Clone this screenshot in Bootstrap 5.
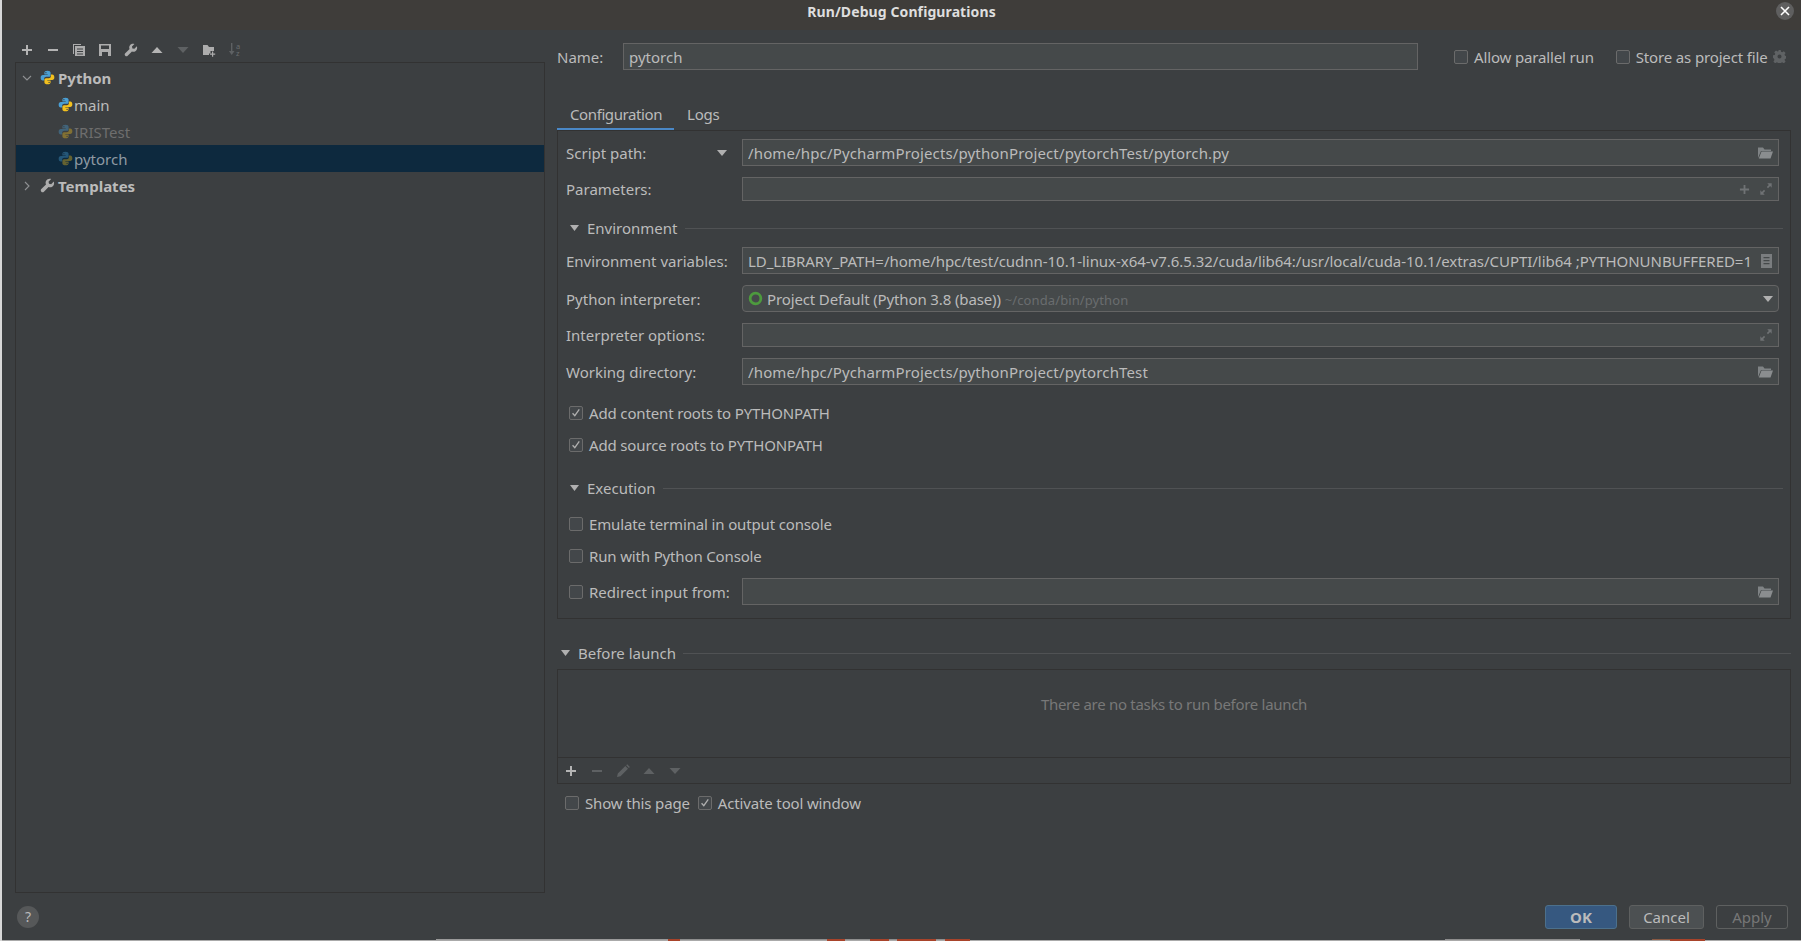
<!doctype html>
<html lang="en">
<head>
<meta charset="utf-8">
<title>Run/Debug Configurations</title>
<link rel="stylesheet" href="https://cdn.jsdelivr.net/npm/bootstrap@5.3.0/dist/css/bootstrap.min.css">
<style>
html,body{margin:0;height:941px;overflow:hidden;background:#3c3f41}
body{font-family:"Noto Sans","Liberation Sans",sans-serif;font-size:15px;line-height:20px;color:#bbb}
.dlg{width:1801px;height:941px;display:flex;flex-direction:column;border-left:2px solid #d8d8d8}
.ttl{height:30px;flex:none;background:#3f3d3a;color:#dedede;font-weight:700;font-size:14px;letter-spacing:.1px;position:relative;text-align:center;line-height:23px}
.closer{position:absolute;right:7px;top:2px;width:18px;height:18px;border-radius:50%;background:#5f5f5f;display:flex;align-items:center;justify-content:center}
.mainrow{flex:1;display:flex;min-height:0}
.leftp{width:553px;flex:none;padding-left:13px;display:flex;flex-direction:column}
.tbar{height:32px;flex:none;display:flex;align-items:center;padding-top:7px}
.tbtn{width:26px;height:26px;display:flex;align-items:center;justify-content:center;flex:none}
.tbar.main{margin-left:-1px}
.tree{width:530px;height:831px;border:1px solid #323232;padding:1px 0 0;flex:none}
.trow{height:27px;display:flex;align-items:center;white-space:nowrap}
.trow.sel{background:#0d293e}
.tw{width:10px;margin-left:6px;margin-right:8px;display:flex}
.trow.kid{padding-left:42px}
.trow .ic{margin-right:1px}
.trow .bld{font-weight:700;margin-left:2px}
.dimt{color:#6e6e6e}
.dim2{opacity:.38}
.seltxt{color:#8f9aa3}
.helpb{width:22px;height:22px;border-radius:50%;background:#565859;color:#bbb;display:flex;align-items:center;justify-content:center;margin:13px 0 0 2px;font-size:14px}
.rightp{flex:1;padding:13px 10px 0 2px;min-width:0;display:flex;flex-direction:column}
.namerow{display:flex;align-items:center;height:27px}
.namelbl{width:66px;flex:none}
.fld{background:#45494a;border:1px solid #646464;border-radius:0;color:#bbb;font-size:15px;line-height:20px;padding:0 5px;display:flex;align-items:center;white-space:nowrap;min-width:0;box-shadow:none}
.fld .val{flex:1;overflow:hidden}
.fld .endi{display:flex;gap:9px;align-items:center}
.nm{width:795px;flex:none;height:27px}
.chk{width:14px;height:14px;border:1px solid #6b6b6b;border-radius:2px;background:#43474a;flex:none;display:flex;align-items:center;justify-content:center}
.chkl{display:flex;align-items:center;gap:6px;white-space:nowrap;letter-spacing:-.15px}
.nav.tabsx{margin-top:31px;border:0;height:30px;flex:none}
.tabx{height:30px;padding:0 13px;color:#bbb}
.tabx.on{width:117px;border-bottom:3px solid #4a88c7;line-height:26px;letter-spacing:-.4px}
.tabx.off{line-height:26px;letter-spacing:-.2px}
.panel{border:1px solid #323232;height:489px;padding:8px 11px 0 8px;margin-top:-1px;flex:none;width:1234px}
.frow{display:flex;align-items:center;flex:none}
.flbl{width:176px;flex:none;white-space:nowrap;display:flex;justify-content:space-between;align-items:center;padding-right:15px}
.fld.w{flex:1}
.ls-wide{letter-spacing:.14px}
.ls-env{letter-spacing:-.035px}
.ls-proj{letter-spacing:-.13px}
.hdr{display:flex;align-items:center;height:20px;flex:none;white-space:nowrap}
.hdr .tri{margin:0 8px 0 4px;flex:none}
.hdr .ln{flex:1;height:1px;background:#505254;margin-left:7px}
.panel .hdr .ln{margin-right:-4px}
.blbox{width:1234px;height:115px;border:1px solid #323232;margin-top:6px;flex:none;display:flex;flex-direction:column}
.blmsg{height:88px;display:flex;align-items:center;justify-content:center;color:#787878;border-bottom:1px solid #323232;flex:none;padding-bottom:20px;letter-spacing:-.3px}
.bltb{height:25px;display:flex;align-items:center;padding-left:0}
.bltb .tbtn{height:25px}
.grayhint{color:#6a6d6f;font-size:13px;margin-left:4px;letter-spacing:.1px;padding-top:2px}
.foot{display:flex;justify-content:flex-end;gap:12px;padding-right:3px;margin-top:auto;margin-bottom:10px}
.btn.jb{height:24px;padding:0;font-size:15px;line-height:22px;border-radius:3px;color:#bbb;background:#4c5052;border:1px solid #5e6060;width:75px}
.btn.jb.ok{background:#365880;border-color:#4c708c;font-weight:700;width:72px;color:#bbb}
.btn.jb.ap{background:transparent;border-color:#5e6060;color:#777;width:72px}
.strip{height:2px;flex:none;display:flex;flex-direction:column}
.strip-a,.strip-b{height:1px;flex:none}
.strip-a{background:linear-gradient(90deg,#3c3f41 0,#3c3f41 434px,#9a9a9a 434px,#9a9a9a 666px,#a8432a 666px,#a8432a 678px,#8d8d8d 678px,#8d8d8d 825px,#a8432a 825px,#a8432a 843px,#8d8d8d 843px,#8d8d8d 868px,#a8432a 868px,#a8432a 887px,#8d8d8d 887px,#8d8d8d 895px,#a8432a 895px,#a8432a 934px,#8d8d8d 934px,#8d8d8d 943px,#a8432a 943px,#a8432a 968px,#3c3f41 968px,#3c3f41 1443px,#8d8d8d 1443px,#8d8d8d 1578px,#3c3f41 1578px,#3c3f41 1650px,#8a5a44 1650px,#8a5a44 1668px,#a8432a 1668px,#a8432a 1703px,#3c3f41 1703px)}
.strip-b{background:linear-gradient(90deg,#aaa 0,#aaa 666px,#a8432a 666px,#a8432a 678px,#aaa 678px,#aaa 825px,#a8432a 825px,#a8432a 843px,#aaa 843px,#aaa 868px,#a8432a 868px,#a8432a 887px,#aaa 887px,#aaa 895px,#a8432a 895px,#a8432a 934px,#aaa 934px,#aaa 943px,#a8432a 943px,#a8432a 968px,#aaa 968px,#aaa 1668px,#a8432a 1668px,#a8432a 1703px,#aaa 1703px)}
.ms-allow{margin-left:36px}.ms-store{margin-left:22px}.ms-gear{margin-left:6px}
.fh27{height:27px}.fh24{height:24px}
.mt9{margin-top:9px}.mt11{margin-top:11px}.mt12{margin-top:12px}.mt16{margin-top:16px}.mt17{margin-top:17px}.mt18{margin-top:18px}.mt23{margin-top:23px}.mt24{margin-top:24px}
.ck3{margin-left:3px}.ckm{margin-left:-1px;letter-spacing:0}
.showrow{margin-top:9px;padding-left:8px}
.defs-host{position:absolute;width:0;height:0}
</style>
</head>
<body>
<svg class="defs-host" aria-hidden="true">
<defs>
<symbol id="py" viewBox="0 0 16 16">
 <path fill="#4a9fd4" d="M8 .8C5.6.8 4.7 1.7 4.7 3v1.7h3.5v.6H3.1C1.6 5.3.7 6.4.7 8.2c0 1.8.9 3 2.2 3h1.5V9.4c0-1.2 1-2.1 2.2-2.1h3c1 0 1.7-.8 1.7-1.8V3c0-1.400-1.200-2.200-3.300-2.200z"/>
 <circle cx="6.300" cy="2.800" r=".7" fill="#3c3f41"/>
 <path fill="#f2c01e" d="M8 15.200c2.400 0 3.300-.9 3.300-2.200v-1.700H7.800v-.6h5.100c1.500 0 2.400-1.100 2.400-2.900 0-1.800-.9-3-2.200-3h-1.500v1.800c0 1.200-1 2.100-2.200 2.100h-3c-1 0-1.700.8-1.700 1.800V13c0 1.400 1.200 2.200 3.300 2.200z"/>
 <circle cx="9.700" cy="13.200" r=".7" fill="#3c3f41"/>
</symbol>
<symbol id="wr" viewBox="0 0 16 16"><path d="M14.700 3.800 11.900 6.600 9.600 6.200 9.100 3.900 11.900 1.100C9.900.4 7.600 1.100 6.500 3c-.7 1.200-.7 2.700-.1 3.900L1.400 11.800c-.8.8-.8 2 0 2.800.8.800 2 .800 2.800 0L9.100 9.600c1.200.6 2.700.5 3.900-.2 1.900-1.100 2.500-3.500 1.700-5.600z"/></symbol>
<symbol id="fo" viewBox="0 0 16 16"><path d="M1 2.500h5l1.500 2H14v1.500H4L1 13z" opacity=".85"/><path d="M4.500 6.500H16L13.500 13.500H1.800z"/></symbol>
<symbol id="ex" viewBox="0 0 16 16"><path d="M9.500 1.500h5v5l-1.800-1.800-2.400 2.400-1.400-1.400 2.400-2.400zM6.500 14.500h-5v-5l1.800 1.800 2.400-2.400 1.400 1.400-2.400 2.400z"/></symbol>
<symbol id="cm" viewBox="0 0 14 14"><path d="M3 7.300 5.600 10.200 10.800 2.800" fill="none" stroke="#b0b0b0" stroke-width="1.500"/></symbol>
</defs>
</svg>
<div class="dlg">
 <div class="ttl">Run/Debug Configurations
  <span class="closer"><svg width="10" height="10" viewBox="0 0 10 10"><path d="M1 1l8 8M9 1l-8 8" stroke="#fff" stroke-width="1.600"/></svg></span>
 </div>
 <div class="mainrow">
  <div class="leftp">
   <div class="tbar main">
    <div class="tbtn"><svg width="12" height="12" viewBox="0 0 12 12"><path d="M5 1h2v4h4v2H7v4H5V7H1V5h4z" fill="#b4b4b4"/></svg></div>
    <div class="tbtn"><svg width="12" height="12" viewBox="0 0 12 12"><path d="M1 5h10v2H1z" fill="#b4b4b4"/></svg></div>
    <div class="tbtn"><svg width="14" height="14" viewBox="0 0 14 14" fill="#adadad"><path d="M1 1h8v1H2v9H1z"/><path fill-rule="evenodd" d="M3 3h10v10H3zM5 5.500v1h6v-1zM5 8v1h6V8zM5 10.500v1h6v-1z"/></svg></div>
    <div class="tbtn"><svg width="14" height="14" viewBox="0 0 14 14" fill="#adadad"><path fill-rule="evenodd" d="M1 1h12v12H1zM3 2.500v3.500h8V2.500zM4 9v4h6V9z"/></svg></div>
    <div class="tbtn"><svg width="14" height="14" fill="#adadad"><use href="#wr"/></svg></div>
    <div class="tbtn"><svg width="12" height="8" viewBox="0 0 12 8"><path d="M6 1l5.500 6H.5z" fill="#b4b4b4"/></svg></div>
    <div class="tbtn"><svg width="12" height="8" viewBox="0 0 12 8"><path d="M6 7 11.500 1H.5z" fill="#5e6163"/></svg></div>
    <div class="tbtn"><svg width="14" height="14" viewBox="0 0 14 14" fill="#adadad"><path d="M1 2h4.500l1.500 2h5v4H8.500v2.500H7V12H1z"/><path d="M10 8.500h1.200v2h2v1.200h-2v2H10v-2H8v-1.200h2z"/></svg></div>
    <div class="tbtn"><svg width="16" height="15" viewBox="0 0 16 15"><path d="M4 1h1.400v8H7.500L4.700 13 1.900 9H4z" fill="#5e6163"/><text x="9" y="6.500" font-size="7.500" fill="#6a6d6f" font-family="Noto Sans, sans-serif">a</text><text x="9" y="13.500" font-size="7.500" fill="#6a6d6f" font-family="Noto Sans, sans-serif">z</text></svg></div>
   </div>
   <div class="tree">
    <div class="trow"><span class="tw"><svg width="10" height="10" viewBox="0 0 10 10"><path d="M1 3l4 4 4-4" fill="none" stroke="#8f9193" stroke-width="1.100"/></svg></span><svg class="ic" width="15" height="15"><use href="#py"/></svg><span class="bld">Python</span></div>
    <div class="trow kid"><svg class="ic" width="15" height="15"><use href="#py"/></svg><span>main</span></div>
    <div class="trow kid"><svg class="ic dim2" width="15" height="15"><use href="#py"/></svg><span class="dimt">IRISTest</span></div>
    <div class="trow kid sel"><svg class="ic dim2" width="15" height="15"><use href="#py"/></svg><span class="seltxt">pytorch</span></div>
    <div class="trow"><span class="tw"><svg width="10" height="10" viewBox="0 0 10 10"><path d="M3 1l4 4-4 4" fill="none" stroke="#8f9193" stroke-width="1.100"/></svg></span><svg class="ic" width="15" height="15" fill="#adadad"><use href="#wr"/></svg><span class="bld">Templates</span></div>
   </div>
   <div class="helpb">?</div>
  </div>
  <div class="rightp">
   <div class="namerow">
    <div class="namelbl">Name:</div>
    <div class="fld nm">pytorch</div>
    <div class="chkl ms-allow"><span class="chk"></span>Allow parallel run</div>
    <div class="chkl ms-store"><span class="chk"></span>Store as project file</div>
    <svg class="ms-gear" width="13" height="13" viewBox="0 0 16 16"><path fill="#5f6264" fill-rule="evenodd" d="M6.500 0h3l.4 2.200 1.500.6L13.300 1.500l2.200 2.200-1.300 1.900.6 1.500 2.200.4v3l-2.200.4-.6 1.500 1.300 1.900-2.200 2.200-1.900-1.300-1.500.6-.4 2.200h-3l-.4-2.200-1.500-.6-1.900 1.300-2.200-2.200 1.300-1.900-.6-1.500L0 9.500v-3l2.200-.4.6-1.500-1.300-1.900 2.200-2.200 1.900 1.300 1.500-.6zM8 5.500a2.500 2.500 0 1 0 0 5 2.500 2.500 0 0 0 0-5z"/></svg>
   </div>
   <ul class="nav tabsx">
    <li class="tabx on">Configuration</li>
    <li class="tabx off">Logs</li>
   </ul>
   <div class="panel">
    <div class="frow fh27"><div class="flbl"><span>Script path:</span><svg width="10" height="6" viewBox="0 0 10 6"><path d="M0 0h10L5 6z" fill="#b0b0b0"/></svg></div><div class="fld w h-100"><span class="val ls-wide">/home/hpc/PycharmProjects/pythonProject/pytorchTest/pytorch.py</span><span class="endi"><svg width="16" height="16" fill="#8a8d8f"><use href="#fo"/></svg></span></div></div>
    <div class="frow fh24 mt11"><div class="flbl">Parameters:</div><div class="fld w h-100"><span class="val"></span><span class="endi"><svg width="11" height="11" viewBox="0 0 12 12"><path d="M5 1h2v4h4v2H7v4H5V7H1V5h4z" fill="#6f7274"/></svg><svg width="14" height="14" fill="#6f7274"><use href="#ex"/></svg></span></div></div>
    <div class="hdr mt17"><svg class="tri" width="9" height="6" viewBox="0 0 9 6"><path d="M0 0h9L4.500 6z" fill="#b0b0b0"/></svg><span>Environment</span><span class="ln"></span></div>
    <div class="frow fh27 mt9"><div class="flbl">Environment variables:</div><div class="fld w h-100"><span class="val ls-env">LD_LIBRARY_PATH=/home/hpc/test/cudnn-10.1-linux-x64-v7.6.5.32/cuda/lib64:/usr/local/cuda-10.1/extras/CUPTI/lib64 ;PYTHONUNBUFFERED=1</span><span class="endi"><svg width="12" height="14" viewBox="0 0 12 14"><path fill="#7a7d7f" fill-rule="evenodd" d="M0 0h11v14H0zM2.500 3v1.200h6V3zM2.500 6v1.200h6V6zM2.500 9v1.200h6V9z"/></svg></span></div></div>
    <div class="frow fh27 mt11"><div class="flbl">Python interpreter:</div><div class="fld w h-100 rounded-1"><span class="val d-flex align-items-center"><svg class="me-1" width="15" height="15" viewBox="0 0 14 14"><circle cx="7" cy="7" r="5" fill="none" stroke="#4d9a3e" stroke-width="2.600"/></svg><span class="ls-proj">Project Default (Python 3.8 (base))</span><span class="grayhint">~/conda/bin/python</span></span><span class="endi"><svg width="10" height="6" viewBox="0 0 10 6"><path d="M0 0h10L5 6z" fill="#b0b0b0"/></svg></span></div></div>
    <div class="frow fh24 mt11"><div class="flbl">Interpreter options:</div><div class="fld w h-100"><span class="val"></span><span class="endi"><svg width="14" height="14" fill="#6f7274"><use href="#ex"/></svg></span></div></div>
    <div class="frow fh27 mt11"><div class="flbl">Working directory:</div><div class="fld w h-100"><span class="val ls-wide">/home/hpc/PycharmProjects/pythonProject/pytorchTest</span><span class="endi"><svg width="16" height="16" fill="#8a8d8f"><use href="#fo"/></svg></span></div></div>
    <div class="chkl ck3 mt18"><span class="chk"><svg width="12" height="12"><use href="#cm"/></svg></span>Add content roots to PYTHONPATH</div>
    <div class="chkl ck3 mt12"><span class="chk"><svg width="12" height="12"><use href="#cm"/></svg></span>Add source roots to PYTHONPATH</div>
    <div class="hdr mt23"><svg class="tri" width="9" height="6" viewBox="0 0 9 6"><path d="M0 0h9L4.500 6z" fill="#b0b0b0"/></svg><span>Execution</span><span class="ln"></span></div>
    <div class="chkl ck3 mt16"><span class="chk"></span>Emulate terminal in output console</div>
    <div class="chkl ck3 mt12"><span class="chk"></span>Run with Python Console</div>
    <div class="frow fh27 mt12"><div class="flbl ps-1"><span class="chkl ckm"><span class="chk"></span>Redirect input from:</span></div><div class="fld w h-100"><span class="val"></span><span class="endi"><svg width="16" height="16" fill="#8a8d8f"><use href="#fo"/></svg></span></div></div>
   </div>
   <div class="hdr mt24"><svg class="tri" width="9" height="6" viewBox="0 0 9 6"><path d="M0 0h9L4.500 6z" fill="#b0b0b0"/></svg><span>Before launch</span><span class="ln"></span></div>
   <div class="blbox">
    <div class="blmsg">There are no tasks to run before launch</div>
    <div class="bltb">
     <div class="tbtn"><svg width="12" height="12" viewBox="0 0 12 12"><path d="M5 1h2v4h4v2H7v4H5V7H1V5h4z" fill="#b4b4b4"/></svg></div>
     <div class="tbtn"><svg width="12" height="12" viewBox="0 0 12 12"><path d="M1 5h10v2H1z" fill="#5e6163"/></svg></div>
     <div class="tbtn"><svg width="14" height="14" viewBox="0 0 14 14"><path d="M1 13l.8-3.500 7.500-7.500 2.700 2.700-7.500 7.500zM10.200 1.200l1-1 2.700 2.700-1 1z" fill="#5e6163"/></svg></div>
     <div class="tbtn"><svg width="12" height="8" viewBox="0 0 12 8"><path d="M6 1l5.500 6H.5z" fill="#5e6163"/></svg></div>
     <div class="tbtn"><svg width="12" height="8" viewBox="0 0 12 8"><path d="M6 7 11.500 1H.5z" fill="#5e6163"/></svg></div>
    </div>
   </div>
   <div class="d-flex showrow">
    <div class="chkl"><span class="chk"></span>Show this page</div>
    <div class="chkl ms-2"><span class="chk"><svg width="12" height="12"><use href="#cm"/></svg></span>Activate tool window</div>
   </div>
   <div class="foot">
    <button class="btn jb ok" type="button">OK</button>
    <button class="btn jb" type="button">Cancel</button>
    <button class="btn jb ap" type="button">Apply</button>
   </div>
  </div>
 </div>
 <div class="strip"><div class="strip-a"></div><div class="strip-b"></div></div>
</div>
<script src="https://cdn.jsdelivr.net/npm/bootstrap@5.3.0/dist/js/bootstrap.bundle.min.js"></script>
</body>
</html>
